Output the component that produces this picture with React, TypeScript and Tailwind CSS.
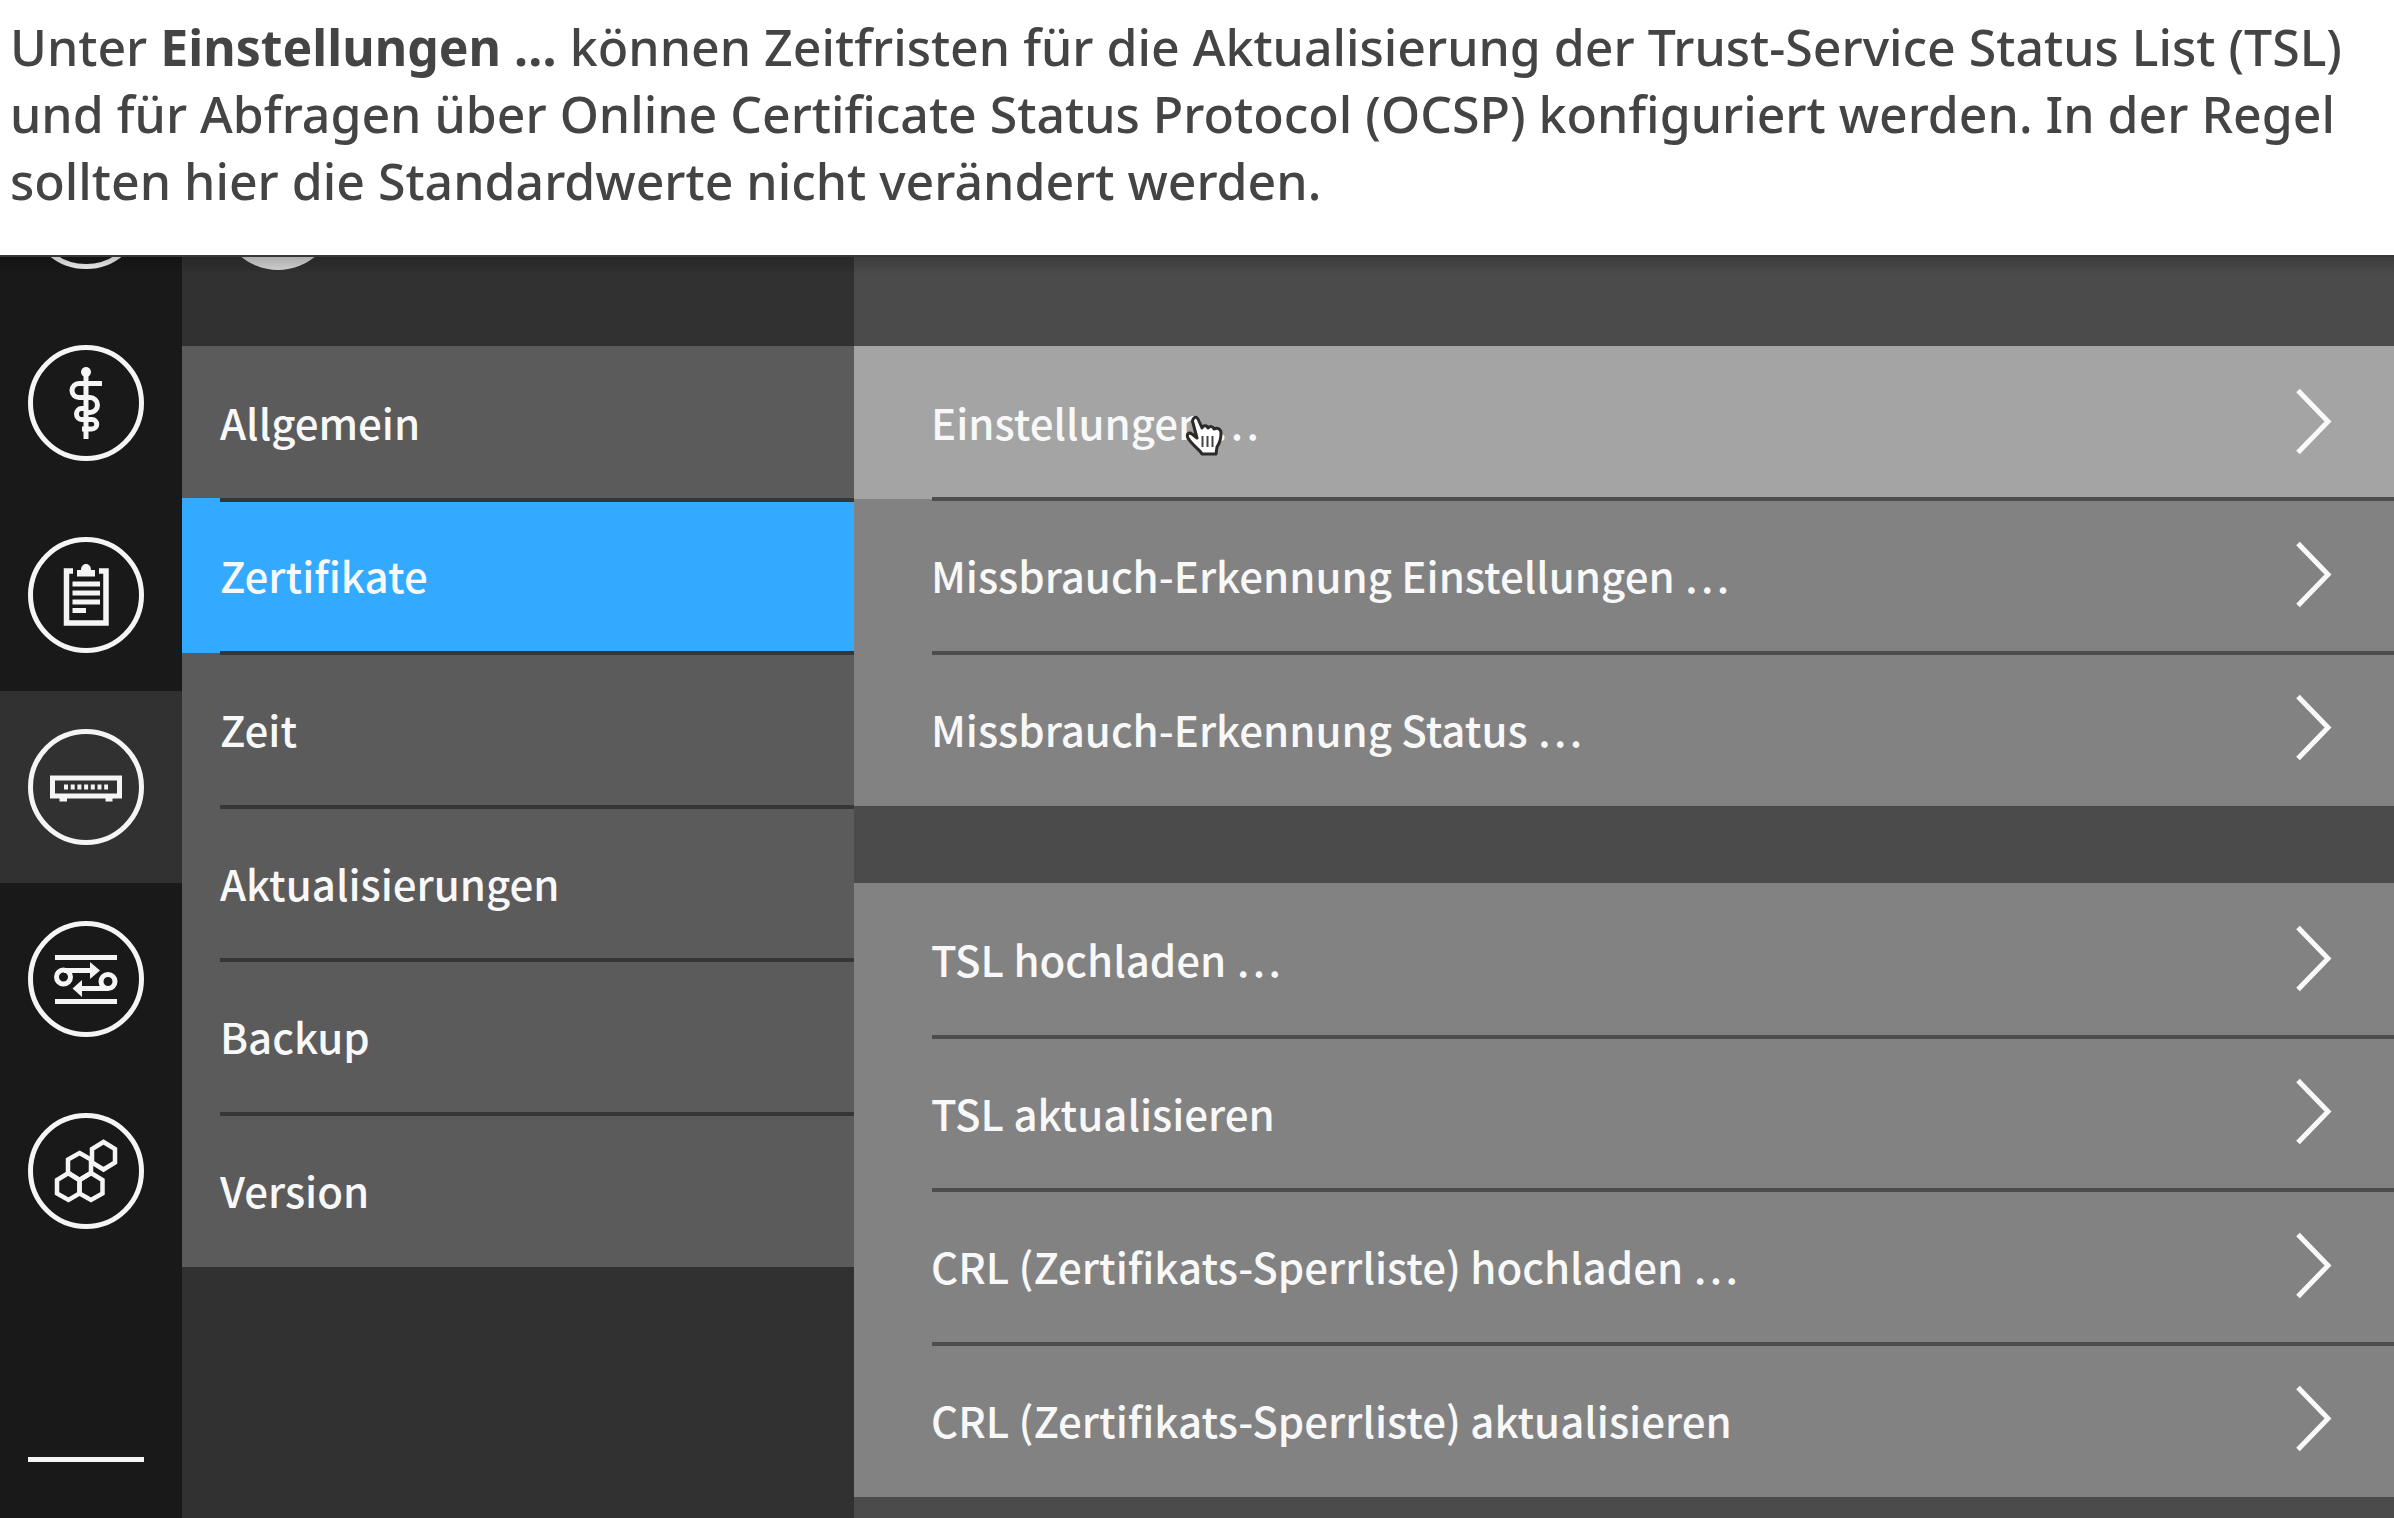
import React from "react";

function Ring({ children }: { children?: React.ReactNode }) {
  return (
    <svg
      viewBox="0 0 116 116"
      className="h-[116px] w-[116px] shrink-0"
      fill="none"
      stroke="#f5f5f5"
      strokeWidth="5"
      aria-hidden="true"
    >
      <circle cx="58" cy="58" r="55.5" />
      {children}
    </svg>
  );
}

const railItems = [
  {
    label: "Praxis",
    icon: (
      <g>
        <circle cx="58" cy="27" r="5" fill="#f5f5f5" stroke="none" />
        <path d="M58 27V94" />
        <path
          d="M74 38.500H51a7 7 0 0 0 0 14H62a7.500 7.500 0 0 1 0 15M62 67.500L60 67.500M60 63.500H53.500a5 5.500 0 0 0 0 11H64a4.500 4.500 0 0 1 0 9.500H54"
          strokeWidth="5"
        />
      </g>
    ),
  },
  {
    label: "Protokoll",
    icon: (
      <g>
        <path d="M45 34H38.500V86H78V34H71" strokeWidth="5.500" />
        <path d="M49 39.500V33H53C53 29.500 55 27 58 27S63 29.500 63 33H67V39.500Z" fill="#f5f5f5" stroke="none" />
        <path d="M44.500 47H72M44.500 56H72M44.500 65H72M44.500 73.500H58" />
      </g>
    ),
  },
  {
    label: "System",
    active: true,
    icon: (
      <g>
        <rect x="24.500" y="49" width="67" height="18" />
        <path d="M36 58H80" strokeWidth="5" strokeDasharray="4 2.700" />
        <path d="M31.500 70.500H39M77.500 70.500H84.500" strokeWidth="4" />
      </g>
    ),
  },
  {
    label: "Netzwerk",
    icon: (
      <g>
        <path d="M27 36.500H89M27 80.500H89" />
        <circle cx="35.500" cy="56" r="7" />
        <circle cx="80" cy="60.500" r="7" />
        <path d="M36 49.500H66M80 67.500H50" />
        <path d="M62 41L72 49.500L62 58ZM54 59L44.500 67.500L54 76Z" fill="#f5f5f5" stroke="none" />
      </g>
    ),
  },
  {
    label: "Module",
    icon: (
      <g strokeWidth="4.500">
        <path d="M75.500 29L87 36V49.500L75.500 56.500L64 49.500V36Z" />
        <path d="M51.500 40L63 46.500V60L51.500 67L40 60V46.500Z" />
        <path d="M40.500 60L51.500 67V80.500L40.500 87L29 80.500V67Z" />
        <path d="M63 60L74.500 67V80.500L63 87L51.500 80.500V67Z" />
      </g>
    ),
  },
];

const menuItems = ["Allgemein", "Zertifikate", "Zeit", "Aktualisierungen", "Backup", "Version"];

const groups = [
  ["Einstellungen …", "Missbrauch-Erkennung Einstellungen …", "Missbrauch-Erkennung Status …"],
  [
    "TSL hochladen …",
    "TSL aktualisieren",
    "CRL (Zertifikats-Sperrliste) hochladen …",
    "CRL (Zertifikats-Sperrliste) aktualisieren",
  ],
];

function HandCursor() {
  return (
    <svg
      viewBox="0 0 40 42"
      className="pointer-events-none absolute top-[69px] left-[330px] h-[42px] w-[40px]"
      aria-hidden="true"
    >
      <path
        d="M10 3C12 1 14 3 15 6L18 13C19 10 23 10 24 13C26 11 29 11 30 14C33 12 37 14 37 18C37 25 35 29 33 32L32 39H18C16 35 8 30 4 23C2 19 5 17 8 19L13 23L9 8C8 6 9 4 10 3Z"
        fill="#fff"
        stroke="#2b2b2b"
        strokeWidth="3"
        strokeLinejoin="round"
      />
      <path d="M18.500 21V32M23.500 21V32M28.500 21V32" stroke="#444" strokeWidth="2" />
    </svg>
  );
}

export default function App() {
  return (
    <div className="flex min-h-screen flex-col bg-white">
      <p className="px-2.5 pt-[14px] pb-[40px] font-['Noto_Sans','Open_Sans',sans-serif] text-[50px] leading-[67px] font-medium text-[#444444]">
        Unter <strong className="font-bold">Einstellungen …</strong> können Zeitfristen für die Aktualisierung der
        Trust-Service Status List (TSL)
        <br />
        und für Abfragen über Online Certificate Status Protocol (OCSP) konfiguriert werden. In der Regel
        <br />
        sollten hier die Standardwerte nicht verändert werden.
      </p>

      <div className="relative flex grow font-['Noto_Sans_CJK_SC',sans-serif] text-[42px] font-medium text-[#f8f8f8]">
        <nav aria-label="Bereiche" className="flex w-[182px] shrink-0 flex-col bg-[#191919]">
          <div className="flex h-[52px] items-end overflow-hidden pb-[38px] pl-7">
            <Ring />
          </div>
          {railItems.map((item) => (
            <button
              key={item.label}
              type="button"
              aria-label={item.label}
              className={item.active ? "bg-[#313131] py-[38px] pl-7" : "py-[38px] pl-7"}
            >
              <Ring>{item.icon}</Ring>
            </button>
          ))}
          <div className="mt-auto mb-14 ml-7 h-[5px] w-[116px] bg-[#f5f5f5]" />
        </nav>

        <nav aria-label="System" className="w-[672px] shrink-0 bg-[#313131]">
          <div className="flex h-[91px] items-start overflow-hidden pl-[38px]">
            <div className="-mt-[101px] h-[116px] w-[116px] rounded-full bg-[#d8d8d8]" />
          </div>
          <ul className="grid h-[921px] auto-rows-fr bg-[#5b5b5b]">
            {menuItems.map((item, i) => (
              <li key={item} className="relative flex">
                {i > 0 && <div className="absolute -top-[2px] right-0 left-[38px] z-10 h-1 bg-[#363636]" />}
                <button
                  type="button"
                  className={
                    item === "Zertifikate"
                      ? "-mt-[2px] grow bg-[#33aaff] pb-0.5 pl-[38px] text-left"
                      : "grow pb-0.5 pl-[38px] text-left"
                  }
                >
                  {item}
                </button>
              </li>
            ))}
          </ul>
        </nav>

        <main className="flex grow flex-col gap-[77px] bg-[#4b4b4b] pt-[91px]">
          {groups.map((group, g) => (
            <ul key={group[0]} className={g === 0 ? "grid h-[460px] auto-rows-fr" : "grid h-[614px] auto-rows-fr"}>
              {group.map((item, i) => (
                <li key={item} className="relative flex">
                  {i > 0 && <div className="absolute -top-[2px] right-0 left-[78px] z-10 h-1 bg-[#4d4d4d]" />}
                  <button
                    type="button"
                    className={
                      g === 0 && i === 0
                        ? "flex grow items-center justify-between bg-[#a4a4a4] pr-[62px] pb-0.5 pl-[77px]"
                        : "flex grow items-center justify-between bg-[#828282] pr-[62px] pb-0.5 pl-[77px]"
                    }
                  >
                    {item}
                    <svg viewBox="0 0 38 70" className="h-[70px] w-[38px]" fill="none" aria-hidden="true">
                      <path d="M4 3.500L34 34.500L4 65.500" stroke="#fafafa" strokeWidth="5" />
                    </svg>
                  </button>
                  {g === 0 && i === 0 && <HandCursor />}
                </li>
              ))}
            </ul>
          ))}
        </main>

        <div className="pointer-events-none absolute inset-x-0 top-0 h-5 border-t-2 border-[#383838] bg-linear-to-b from-black/20 to-transparent" />
      </div>
    </div>
  );
}
